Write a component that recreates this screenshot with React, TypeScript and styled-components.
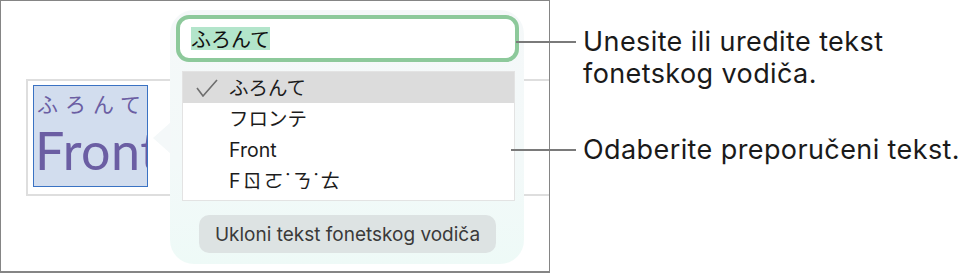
import React from 'react'
import styled, { createGlobalStyle } from 'styled-components'

const GlobalStyle = createGlobalStyle`
  html, body {
    margin: 0;
    padding: 0;
    background: #fff;
  }
  body {
    font-family: Inter, "Liberation Sans", sans-serif;
  }
`

const Page = styled.div`
  width: 960px;
  height: 277px;
  display: flex;
  align-items: flex-start;
  gap: 33px;
`

const Frame = styled.div`
  position: relative;
  width: 551px;
  height: 273px;
  box-sizing: border-box;
  border: 1px solid #858585;
  border-bottom-width: 2px;
  overflow: hidden;
  padding: 78px 0 0 25px;
`

const DocBox = styled.div`
  width: 600px;
  height: 117px;
  box-sizing: border-box;
  border: 2px solid #dedede;
  padding: 4px 5px;
`

const Selection = styled.div`
  width: 115px;
  height: 102px;
  box-sizing: border-box;
  background: #d2ddee;
  border: 1.5px solid #3a72c3;
  overflow: hidden;
  white-space: nowrap;
  color: #6b5ea3;
  font-family: Lato, "Noto Sans CJK JP", sans-serif;
`

const Ruby = styled.div`
  font-family: "Noto Sans CJK JP", sans-serif;
  font-size: 21px;
  line-height: 26px;
  letter-spacing: 7px;
  padding: 4px 0 0 3px;
`

const BaseText = styled.div`
  font-size: 52px;
  line-height: 54px;
  letter-spacing: 0.5px;
  padding-left: 1px;
  margin-top: 7px;
`

const Popover = styled.div`
  position: absolute;
  left: 169px;
  top: 9px;
  width: 354px;
  height: 254px;
  box-sizing: border-box;
  border-radius: 24px;
  background: linear-gradient(180deg, #f5f8f9 0%, #f3f9f9 60%, #eefaf7 100%);
  padding: 5px 5px 11px 6px;
  display: flex;
  flex-direction: column;

  &::before {
    content: '';
    position: absolute;
    left: -17px;
    top: 112px;
    border-style: solid;
    border-width: 16px 18px 16px 0;
    border-color: transparent #f4f8f9 transparent transparent;
  }
`

const Field = styled.div`
  height: 48px;
  box-sizing: border-box;
  border: 4px solid #8dc99b;
  border-radius: 13px;
  background: #fff;
  padding: 0 11px;
  display: flex;
  align-items: center;
`

const FieldText = styled.span`
  font-family: "Noto Sans CJK JP", sans-serif;
  font-size: 20px;
  line-height: 23px;
  color: #111;
  background: #b3e5cb;
`

const List = styled.div`
  margin: 9px 4px 0 6px;
  padding-bottom: 4px;
  background: #fff;
  border: 1px solid #e3e3e3;
  display: flex;
  flex-direction: column;
`

const Row = styled.div<{ selected?: boolean }>`
  height: 31px;
  display: grid;
  grid-template-columns: 46px 1fr;
  align-items: center;
  background: ${({ selected }) => (selected ? '#dcdcdc' : 'transparent')};
  color: #1c1c1c;
  font-size: 19.5px;
  line-height: 24px;
  font-family: Inter, "Noto Sans CJK JP", sans-serif;
`

const CheckCell = styled.div`
  display: flex;
  align-items: center;
  padding-left: 13px;
`

const Bopo = styled.span`
  font-family: Inter, "Noto Sans CJK TC", sans-serif;
  letter-spacing: 2px;
`

const RemoveButton = styled.button`
  align-self: center;
  margin-top: 14px;
  width: 297px;
  height: 38px;
  border: none;
  border-radius: 10px;
  background: #dde3e3;
  color: #3a3a3a;
  font-family: Inter, "Liberation Sans", sans-serif;
  font-size: 19px;
  padding: 0;
`

const Callouts = styled.div`
  display: flex;
  flex-direction: column;
  padding-top: 26px;
  gap: 44px;
`

const Callout = styled.div<{ lineLeft: number }>`
  position: relative;
  font-size: 27px;
  line-height: 32px;
  letter-spacing: 0.4px;
  color: #1a1a1a;
  white-space: nowrap;

  &::before {
    content: '';
    position: absolute;
    left: ${({ lineLeft }) => lineLeft}px;
    width: ${({ lineLeft }) => -lineLeft - 7}px;
    top: 15px;
    height: 2px;
    background: #7a7a7a;
  }
`

const Check = () => (
  <svg width="22" height="18" viewBox="0 0 22 18">
    <polyline points="1,9 7,17 21,1" fill="none" stroke="#6e6e6e" strokeWidth="1.6" />
  </svg>
)

const options = [
  { label: 'ふろんて', checked: true },
  { label: 'フロンテ' },
  { label: 'Front' },
]

export default function App() {
  return (
    <>
      <GlobalStyle />
      <Page>
        <Frame>
          <DocBox>
            <Selection>
              <Ruby>ふろんて</Ruby>
              <BaseText>Front</BaseText>
            </Selection>
          </DocBox>
          <Popover>
            <Field>
              <FieldText>ふろんて</FieldText>
            </Field>
            <List>
              {options.map(o => (
                <Row key={o.label} selected={o.checked}>
                  <CheckCell>{o.checked && <Check />}</CheckCell>
                  <span>{o.label}</span>
                </Row>
              ))}
              <Row>
                <CheckCell />
                <Bopo>Fㄖㄛ˙ㄋ˙ㄊ</Bopo>
              </Row>
            </List>
            <RemoveButton>Ukloni tekst fonetskog vodiča</RemoveButton>
          </Popover>
        </Frame>
        <Callouts>
          <Callout lineLeft={-67}>
            Unesite ili uredite tekst
            <br />
            fonetskog vodiča.
          </Callout>
          <Callout lineLeft={-72}>Odaberite preporučeni tekst.</Callout>
        </Callouts>
      </Page>
    </>
  )
}
